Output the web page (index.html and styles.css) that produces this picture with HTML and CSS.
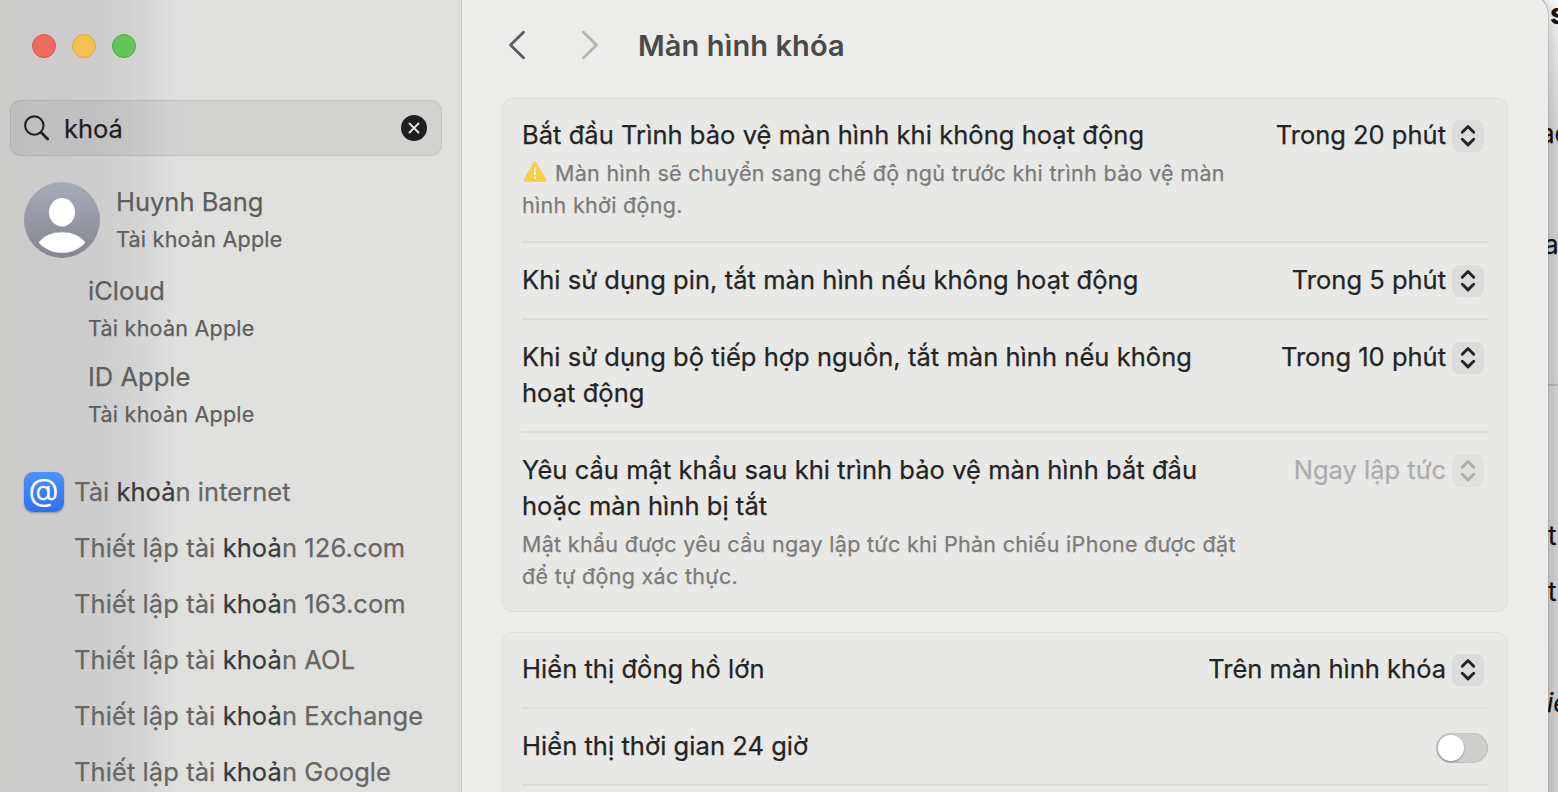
FILE: index.html
```html
<!DOCTYPE html>
<html lang="vi">
<head>
<meta charset="utf-8">
<title>Màn hình khóa</title>
<link rel="stylesheet" href="styles.css">
</head>
<body>
<svg class="defs" width="0" height="0">
  <symbol id="updown" viewBox="0 0 32 32"><path d="M10.3 12.200 16 6.500l5.700 5.700M10.300 19.200l5.700 5.700 5.700-5.700" fill="none" stroke="currentColor" stroke-width="2.900" stroke-linecap="round" stroke-linejoin="round"/></symbol>
</svg>
<div class="desktop">
  <div class="behind">
    <span class="frag frag-s">s</span>
    <span class="frag frag-ac">ac</span>
    <span class="frag frag-a">a</span>
    <span class="frag frag-line"></span>
    <span class="frag frag-t1">t</span>
    <span class="frag frag-t2">t</span>
    <span class="frag frag-ie">ie</span>
  </div>
  <div class="window">
    <aside class="sidebar">
      <div class="lights"><i class="red"></i><i class="yellow"></i><i class="green"></i></div>
      <div class="search">
        <svg class="glass" width="28" height="28" viewBox="0 0 28 28"><circle cx="11.300" cy="11.600" r="9.200" fill="none" stroke="#222" stroke-width="2.100"/><path d="M18 18.300 24.700 25" stroke="#222" stroke-width="2.800" stroke-linecap="round"/></svg>
        <span class="query">khoá</span>
        <svg class="clear" width="26" height="26" viewBox="0 0 26 26"><circle cx="13" cy="13" r="13" fill="#1f1f1f"/><path d="M8.500 8.500l9 9M17.500 8.500l-9 9" stroke="#dededc" stroke-width="2" stroke-linecap="round"/></svg>
      </div>
      <div class="user">
        <svg class="avatar" width="76" height="76" viewBox="0 0 76 76">
          <defs><linearGradient id="av" x1="0" y1="0" x2="0" y2="1"><stop offset="0" stop-color="#a8acb9"/><stop offset="1" stop-color="#838690"/></linearGradient></defs>
          <circle cx="38" cy="38" r="38" fill="url(#av)"/>
          <ellipse cx="38" cy="30.300" rx="13" ry="14.200" fill="#fff"/>
          <path d="M14.700 60.500C20 53.500 28 50.300 38 50.300s18 3.200 23.300 10.200C55.500 67.500 47 70.800 38 70.800s-17.500-3.300-23.300-10.300z" fill="#fff"/>
        </svg>
        <div class="entry"><span class="name">Huynh Bang</span><span class="sub">Tài khoản Apple</span></div>
      </div>
      <div class="entry child"><span class="name">iCloud</span><span class="sub">Tài khoản Apple</span></div>
      <div class="entry child"><span class="name">ID Apple</span><span class="sub">Tài khoản Apple</span></div>
      <div class="internet">
        <span class="at">@</span>
        <span class="link">Tài <b>khoả</b>n internet</span>
      </div>
      <div class="links">
        <span class="link">Thiết lập tài <b>khoả</b>n 126.com</span>
        <span class="link">Thiết lập tài <b>khoả</b>n 163.com</span>
        <span class="link">Thiết lập tài <b>khoả</b>n AOL</span>
        <span class="link">Thiết lập tài <b>khoả</b>n Exchange</span>
        <span class="link">Thiết lập tài <b>khoả</b>n Google</span>
      </div>
    </aside>
    <main class="pane">
      <header class="toolbar">
        <svg class="back" width="18" height="30" viewBox="0 0 18 30"><path d="M15.500 2.200 2.500 15l13 12.800" fill="none" stroke="#5c5c5c" stroke-width="2.800" stroke-linecap="round" stroke-linejoin="round"/></svg>
        <svg class="forward" width="18" height="30" viewBox="0 0 18 30"><path d="M2.500 2.200 15.500 15l-13 12.800" fill="none" stroke="#b2b2b1" stroke-width="2.800" stroke-linecap="round" stroke-linejoin="round"/></svg>
        <h1>Màn hình khóa</h1>
      </header>
      <section class="card">
        <div class="row">
          <div class="text">
            <p class="label">Bắt đầu Trình bảo vệ màn hình khi không hoạt động</p>
            <p class="note"><svg class="warn" width="24" height="22" viewBox="0 0 24 22"><path d="M12 2.800 21.300 19H2.700z" fill="#f8ce46" stroke="#f8ce46" stroke-width="4" stroke-linejoin="round"/><path d="M12 7v6.300" stroke="#fff" stroke-width="1.800" stroke-linecap="round"/><circle cx="12" cy="16.800" r="1.300" fill="#fff"/></svg>Màn hình sẽ chuyển sang chế độ ngủ trước khi trình bảo vệ màn<br>hình khởi động.</p>
          </div>
          <div class="picker"><span>Trong 20 phút</span><svg class="step"><use href="#updown"/></svg></div>
        </div>
        <div class="row">
          <div class="text"><p class="label">Khi sử dụng pin, tắt màn hình nếu không hoạt động</p></div>
          <div class="picker"><span>Trong 5 phút</span><svg class="step"><use href="#updown"/></svg></div>
        </div>
        <div class="row">
          <div class="text"><p class="label">Khi sử dụng bộ tiếp hợp nguồn, tắt màn hình nếu không<br>hoạt động</p></div>
          <div class="picker"><span>Trong 10 phút</span><svg class="step"><use href="#updown"/></svg></div>
        </div>
        <div class="row">
          <div class="text">
            <p class="label">Yêu cầu mật khẩu sau khi trình bảo vệ màn hình bắt đầu<br>hoặc màn hình bị tắt</p>
            <p class="note">Mật khẩu được yêu cầu ngay lập tức khi Phản chiếu iPhone được đặt<br>để tự động xác thực.</p>
          </div>
          <div class="picker disabled"><span>Ngay lập tức</span><svg class="step"><use href="#updown"/></svg></div>
        </div>
      </section>
      <section class="card open">
        <div class="row">
          <div class="text"><p class="label">Hiển thị đồng hồ lớn</p></div>
          <div class="picker"><span>Trên màn hình khóa</span><svg class="step"><use href="#updown"/></svg></div>
        </div>
        <div class="row">
          <div class="text"><p class="label">Hiển thị thời gian 24 giờ</p></div>
          <div class="toggle"><i></i></div>
        </div>
        <div class="row"></div>
      </section>
    </main>
  </div>
</div>
</body>
</html>
```
FILE: styles.css
```css
* { box-sizing: border-box; }
body { margin: 0; font-family: Inter, "Liberation Sans", sans-serif; -webkit-text-stroke: .25px currentColor; overflow: hidden; }
p, h1 { margin: 0; }
.defs { position: absolute; }
.desktop { position: relative; width: 1558px; height: 792px; overflow: hidden; background: linear-gradient(#f6f6f6, #e2e2e2 50px, #cfcfcf 140px, #cdcdcd); }
.behind { position: absolute; inset: 0; }
.frag { position: absolute; color: #111; font-size: 26px; line-height: 36px; }
.frag-s { left: 1550px; top: -4px; font-weight: 700; font-size: 29px; }
.frag-ac { left: 1540px; top: 116px; }
.frag-a { left: 1544px; top: 227px; }
.frag-line { left: 1548px; top: 384px; width: 10px; height: 2px; background: #b4b4b4; }
.frag-t1 { left: 1548px; top: 518px; }
.frag-t2 { left: 1548px; top: 574px; }
.frag-ie { left: 1547px; top: 685px; font-style: italic; }

.window { position: relative; display: flex; width: 1548px; height: 812px; margin-top: -6px; padding-top: 6px; border-radius: 0 20px 0 0; background: #ececea; box-shadow: 0 0 1px 0 rgba(0,0,0,.7), 0 0 12px rgba(0,0,0,.2); overflow: hidden; }
.sidebar { width: 462px; height: 792px; flex: none; padding-left: 10px; border-right: 1px solid #c9c9c7; background: linear-gradient(90deg, #cacac9, #cbcccb 50px, #cdcdcd 95px, #d1d1d1 125px, #d9d9d9 155px, #dfdfdf 175px, #e0e0de 185px, #e0e0de 455px, #dcdcda); }
.lights { display: flex; gap: 16px; padding: 34px 0 0 22px; height: 100px; }
.lights i { width: 24px; height: 24px; border-radius: 50%; border: 1px solid; }
.lights .red { background: #ed6a5f; border-color: #d9564c; }
.lights .yellow { background: #f5c04f; border-color: #dda83c; }
.lights .green { background: #61c655; border-color: #50a945; }
.search { display: flex; align-items: center; width: 432px; height: 56px; padding: 0 14px 0 12px; border: 1px solid rgba(0,0,0,.08); border-radius: 11px; background: rgba(0,0,0,.06); }
.query { flex: 1; margin-left: 13px; font-size: 25.500px; color: #1f1f1f; }
.user { display: flex; gap: 16px; padding: 26px 0 0 14px; height: 117px; }
.avatar { flex: none; }
.entry { display: flex; flex-direction: column; color: #5e5e5d; }
.name { font-size: 25.500px; line-height: 40px; }
.sub { font-size: 21.500px; line-height: 34px; letter-spacing: .24px; }
.child { padding-left: 78px; height: 86px; margin-top: -2px; }
.child + .child { margin-top: 0; }
.internet { display: flex; align-items: center; gap: 10px; padding-left: 14px; height: 40px; margin-top: 29px; margin-bottom: 8px; }
.at { width: 40px; height: 40px; border-radius: 9px; background: linear-gradient(#4b93f8, #2f70f2); color: #fff; font-size: 31px; line-height: 35px; text-align: center; text-indent: -1px; -webkit-text-stroke: 0; box-shadow: 0 1px 2px rgba(0,0,0,.3); }
.link { font-size: 25.500px; color: #666665; white-space: nowrap; letter-spacing: .08px; }
.internet .link { line-height: 40px; height: 40px; letter-spacing: .04px; }
.link b { font-weight: 400; color: #3b3b3a; }
.links { display: flex; flex-direction: column; padding-left: 64px; }
.links .link { line-height: 56px; height: 56px; }

.pane { flex: 1; padding: 0 40px; }
.toolbar { display: flex; align-items: center; height: 98px; padding: 0 0 8px 6px; }
.forward { margin-left: 55px; }
h1 { margin-left: 39px; padding-top: 1px; font-size: 29px; font-weight: 600; color: #4a4a49; line-height: 40px; letter-spacing: .1px; -webkit-text-stroke: 0; }
.card { width: 1006px; border: 1px solid #dededc; border-radius: 11px; background: #e8e8e6; padding: 0 19px; margin-bottom: 20px; }
.open { height: 200px; }
.row { display: flex; justify-content: space-between; padding: 19px 0 20px; border-bottom: 2px solid #dcdcda; color: #242424; }
.row:first-child { padding-top: 18px; }
.row:last-child { border: 0; padding-bottom: 19px; }
.label { font-size: 25.500px; line-height: 36px; letter-spacing: .045px; white-space: nowrap; }
.note { margin-top: 4px; font-size: 21.500px; line-height: 32px; letter-spacing: .31px; color: #7b7b7a; white-space: nowrap; }
.warn { margin: 0 8px 0 1px; vertical-align: -2px; }
.picker { display: flex; height: 36px; padding-right: 4px; gap: 6px; font-size: 25.500px; line-height: 36px; white-space: nowrap; }
.step { width: 32px; height: 32px; margin-top: 3px; border-radius: 8px; background: #dcdcda; }
.disabled { color: #adadac; }
.disabled .step { background: #e1e1df; }
.toggle { width: 52px; height: 30px; margin-top: 5px; margin-bottom: 1px; padding: 2px; border-radius: 15px; background: #cfcfcd; box-shadow: inset 0 0 2px rgba(0,0,0,.25); }
.toggle i { display: block; width: 26px; height: 26px; border-radius: 50%; background: #fff; box-shadow: 0 1px 2px rgba(0,0,0,.35); }
```
